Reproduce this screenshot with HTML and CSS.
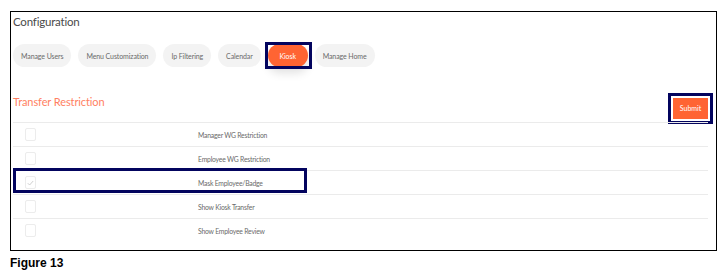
FILE: index.html
```html
<!DOCTYPE html>
<html lang="en">
<head>
    <meta charset="UTF-8">
    <title>Configuration - Kiosk</title>
    <link rel="stylesheet" href="styles.css">
</head>
<body>
    <div class="figure">
        <div class="panel">
            <h1 class="page-title">Configuration</h1>

            <div class="tabs">
                <button class="tab">Manage Users</button>
                <button class="tab">Menu Customization</button>
                <button class="tab">Ip Filtering</button>
                <button class="tab">Calendar</button>
                <button class="tab active marked">Kiosk</button>
                <button class="tab">Manage Home</button>
            </div>

            <div class="section-head">
                <h2 class="section-title">Transfer Restriction</h2>
                <button class="submit-btn marked">Submit</button>
            </div>

            <div class="options">
                <div class="option-row">
                    <span class="check"></span>
                    <span class="option-label">Manager WG Restriction</span>
                </div>
                <div class="option-row">
                    <span class="check"></span>
                    <span class="option-label">Employee WG Restriction</span>
                </div>
                <div class="option-row highlighted">
                    <span class="check checked">
                        <svg width="7" height="6" viewBox="0 0 7 6"><polyline points="0.8,3.2 2.6,5 6.2,1" fill="none" stroke="#c8c8c8" stroke-width="0.9"/></svg>
                    </span>
                    <span class="option-label">Mask Employee/Badge</span>
                    <span class="row-mark"></span>
                </div>
                <div class="option-row">
                    <span class="check"></span>
                    <span class="option-label">Show Kiosk Transfer</span>
                </div>
                <div class="option-row">
                    <span class="check"></span>
                    <span class="option-label">Show Employee Review</span>
                </div>
            </div>
        </div>
        <div class="caption">Figure 13</div>
    </div>
</body>
</html>
```

FILE: styles.css
```css
:root {
    --orange: #ff6433;
    --salmon: #ff7f62;
    --navy: #03045e;
    --pill: #f3f3f3;
    --line: #ebebeb;
    --text-muted: #6a6a6a;
}
body {
    margin: 0;
    background-color: #fff;
    font-family: Lato, 'Open Sans', sans-serif;
    color: #555;
}
.figure {
    padding: 11px 0 0 10px;
}
.panel {
    width: 707px;
    height: 240px;
    box-sizing: border-box;
    border: 1px solid #000;
    padding: 0 8px 0 2px;
}
.page-title {
    margin: 2px 0 0 0;
    font-size: 11.5px;
    font-weight: 400;
    line-height: 16px;
    letter-spacing: -0.2px;
    color: #4a4a4a;
}
.tabs {
    display: flex;
    gap: 7px;
    margin-top: 14px;
}
.tab {
    position: relative;
    height: 23px;
    padding: 0 8px;
    border: none;
    border-radius: 12px;
    background-color: var(--pill);
    color: var(--text-muted);
    font-family: Lato, sans-serif;
    font-size: 7px;
    letter-spacing: -0.1px;
}
.tab.active {
    width: 40px;
    padding: 0;
    background-color: var(--orange);
    color: #fff;
    box-shadow: 0 6px 10px rgba(0,0,0,0.12);
}
/* annotation boxes drawn over the screenshot */
.tab.marked::after {
    content: "";
    position: absolute;
    top: -2px;
    bottom: -2px;
    left: -3px;
    right: -4px;
    border: 3px solid var(--navy);
}
.section-head {
    display: flex;
    justify-content: space-between;
    align-items: center;
    height: 28px;
    margin-top: 27px;
}
.section-title {
    align-self: flex-start;
    margin: 0;
    font-size: 11px;
    font-weight: 400;
    line-height: 16px;
    letter-spacing: -0.1px;
    color: var(--salmon);
}
.submit-btn {
    width: 35px;
    height: 21px;
    padding: 0;
    border: none;
    background-color: var(--orange);
    color: #fff;
    font-family: Lato, sans-serif;
    font-size: 7px;
}
.submit-btn.marked {
    outline: 3px solid var(--navy);
    outline-offset: 2px;
}
.option-row {
    position: relative;
    display: flex;
    align-items: center;
    height: 24px;
    box-sizing: border-box;
    border-top: 1px solid var(--line);
}
.check {
    display: flex;
    align-items: center;
    justify-content: center;
    width: 11px;
    height: 13px;
    box-sizing: border-box;
    margin-left: 12px;
    border: 1px solid #ececec;
    border-radius: 2px;
}
.option-label {
    margin-left: 162px;
    font-size: 6.8px;
    letter-spacing: -0.2px;
    color: var(--text-muted);
}
.row-mark {
    position: absolute;
    left: 0;
    top: -3px;
    width: 294px;
    height: 25px;
    box-sizing: border-box;
    border: 3px solid var(--navy);
}
.caption {
    margin-top: 5px;
    font-family: 'Liberation Sans', Arial, sans-serif;
    font-weight: bold;
    font-size: 12px;
    line-height: 14px;
    color: #000;
}
```
